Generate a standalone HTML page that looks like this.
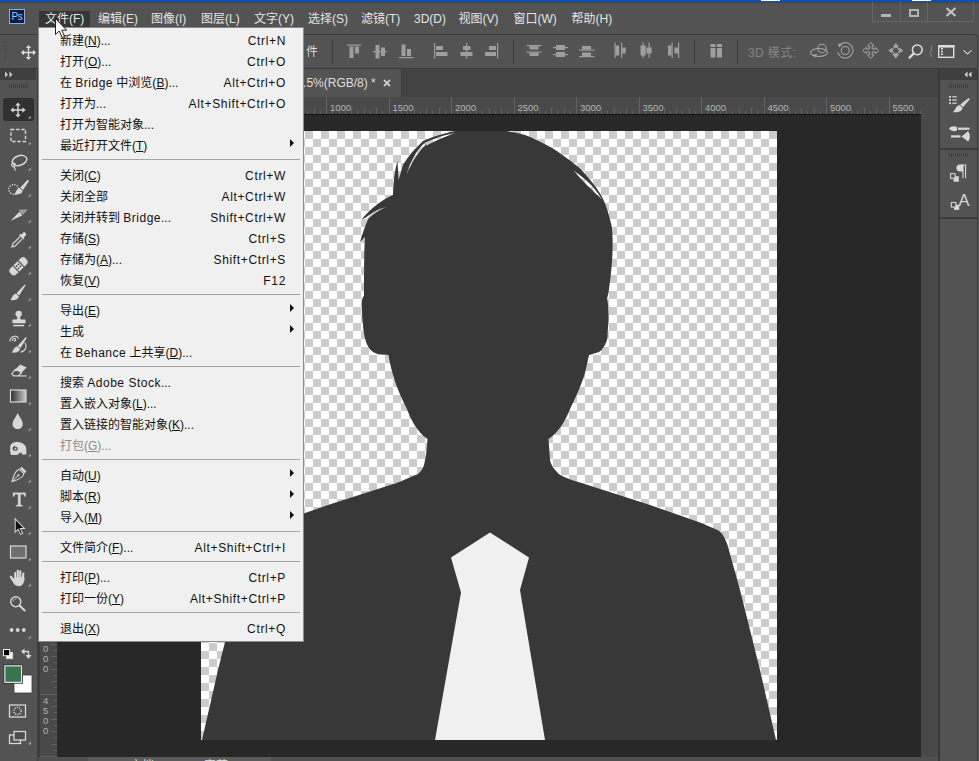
<!DOCTYPE html>
<html lang="zh-CN">
<head>
<meta charset="utf-8">
<title>Photoshop</title>
<style>
*{box-sizing:border-box;margin:0;padding:0}
html,body{width:979px;height:761px;overflow:hidden;background:#535353}
body{position:relative;font-family:"Liberation Sans","Noto Sans CJK SC",sans-serif;font-size:12px;color:#e6e6e6}
.abs{position:absolute}
#topblue{left:0;top:0;width:979px;height:2px;background:#1051b0}
#menubar{left:0;top:2px;width:979px;height:32px;background:#535353}
.mi{position:absolute;top:9px;height:16px;line-height:16px;font-size:12px;color:#e4e4e4;white-space:nowrap}
#optbar{left:0;top:34px;width:978px;height:35px;background:#535353;border:1px solid #3a3a3a;border-left:none;border-radius:0 4px 4px 0}
.vsep{position:absolute;top:40px;width:1px;height:24px;background:#3f3f3f}
#toolbar{left:0;top:69px;width:38px;height:692px;background:#535353;border-right:1px solid #3c3c3c}
#tabbar{left:38px;top:69px;width:901px;height:28px;background:#434343}
#hruler{left:38px;top:97px;width:883px;height:17px;background:#464646}
#vruler{left:40px;top:114px;width:17px;height:643px;background:#464646}
#work{left:57px;top:114px;width:864px;height:642.5px;background:#282828;overflow:hidden;border-top:1px solid #101010}
#vscroll{left:921px;top:97px;width:17px;height:660px;background:#494949}
#status{left:38px;top:757px;width:901px;height:4px;background:#4f4f4f}
#rpanel{left:938px;top:69px;width:41px;height:692px;background:#535353;border-left:2px solid #383838}
#menu{left:38px;top:27px;width:266px;height:615px;background:#f0f0f0;border:1px solid #8a8a8a;padding:2px 2px;color:#111;font-size:12px}
.it{position:relative;height:21px;line-height:22px;padding-left:19px;white-space:nowrap}
.la{letter-spacing:0.5px}
.it .sc{position:absolute;right:15px;top:0;letter-spacing:0.65px}
.it .ar{position:absolute;right:7px;top:3.5px;width:0;height:0;border-left:4px solid #111;border-top:4px solid transparent;border-bottom:4px solid transparent}
.it.dis{color:#8c8c8c}
.sp{height:9px;position:relative}
.sp:after{content:"";position:absolute;left:1px;right:1px;top:3px;height:1px;background:#a5a5a5}
u{text-decoration:underline;text-underline-offset:1px}
</style>
</head>
<body>
<div id="topblue" class="abs"><i class="abs" style="left:761px;top:0;width:19px;height:1px;background:#fff"></i><i class="abs" style="left:912px;top:0;width:19px;height:1px;background:#fff"></i></div>
<div id="menubar" class="abs"><i class="abs" style="left:0;top:0;width:979px;height:1px;background:#454a50"></i><i class="abs" style="left:0;top:1px;width:979px;height:1px;background:#4d4d4d"></i><div class="abs" style="left:39px;top:9px;width:51px;height:16px;background:#363636"></div><div class="abs" style="left:9px;top:7px;width:16px;height:15px;background:#0c1d3f;border:1px solid #86aee2;color:#a4c8f6;font-size:10px;line-height:13px;text-align:center;letter-spacing:-0.4px">Ps</div><span class="mi" style="left:45px">文件(F)</span><span class="mi" style="left:98px">编辑(E)</span><span class="mi" style="left:151px">图像(I)</span><span class="mi" style="left:201px">图层(L)</span><span class="mi" style="left:254px">文字(Y)</span><span class="mi" style="left:308px">选择(S)</span><span class="mi" style="left:361px">滤镜(T)</span><span class="mi" style="left:414px">3D(D)</span><span class="mi" style="left:458.5px">视图(V)</span><span class="mi" style="left:513.5px">窗口(W)</span><span class="mi" style="left:571.5px">帮助(H)</span><div class="abs" style="left:872px;top:0;width:102px;height:20px;border:1px solid #666;border-top:none"></div><div class="abs" style="left:900px;top:0;width:1px;height:19px;background:#666"></div><div class="abs" style="left:927px;top:0;width:1px;height:19px;background:#666"></div><div class="abs" style="left:881px;top:12px;width:10px;height:3px;background:#b4b4b4"></div><div class="abs" style="left:909px;top:7px;width:10px;height:8px;border:2px solid #b4b4b4"></div><svg class="abs" style="left:945px;top:5px" width="12" height="10" viewBox="0 0 12 10"><path d="M1.5,1 L10.5,9 M10.5,1 L1.5,9" stroke="#c4c4c4" stroke-width="2.2" fill="none"/></svg></div>
<div id="optbar" class="abs"></div>
<svg class="abs" style="left:0;top:35px" width="978" height="33" viewBox="0 35 978 33"><path d="M4.5,42V60M6.5,42V60" stroke="#454545" stroke-width="1" stroke-dasharray="1,1"/><path transform="translate(28.5,52.5)" d="M0,-7.6 L2.7,-4.4 L0.7,-4.4 L0.7,-0.7 L4.4,-0.7 L4.4,-2.7 L7.6,0 L4.4,2.7 L4.4,0.7 L0.7,0.7 L0.7,4.4 L2.7,4.4 L0,7.6 L-2.7,4.4 L-0.7,4.4 L-0.7,0.7 L-4.4,0.7 L-4.4,2.7 L-7.6,0 L-4.4,-2.7 L-4.4,-0.7 L-0.7,-0.7 L-0.7,-4.4 L-2.7,-4.4 Z" fill="#dcdcdc"/><path d="M332.5,40V64" stroke="#3d3d3d" stroke-width="1"/><path d="M513.5,40V64" stroke="#3d3d3d" stroke-width="1"/><path d="M694.5,40V64" stroke="#3d3d3d" stroke-width="1"/><path d="M737.5,40V64" stroke="#3d3d3d" stroke-width="1"/><rect x="347" y="44.5" width="14" height="1.2" fill="#9e9e9e"/><rect x="349.5" y="46.5" width="4" height="11.5" fill="#9e9e9e"/><rect x="355" y="46.5" width="4" height="7" fill="#9e9e9e"/><rect x="373" y="51" width="14" height="1.2" fill="#9e9e9e"/><rect x="375.5" y="45" width="4" height="13.5" fill="#9e9e9e"/><rect x="381" y="47.5" width="4" height="8.5" fill="#9e9e9e"/><rect x="399" y="57" width="14.5" height="1.2" fill="#9e9e9e"/><rect x="401.5" y="44.5" width="4" height="11.5" fill="#9e9e9e"/><rect x="407" y="49" width="4" height="7" fill="#9e9e9e"/><rect x="434" y="43" width="1.2" height="15.5" fill="#9e9e9e"/><rect x="436" y="46" width="7" height="4" fill="#9e9e9e"/><rect x="436" y="52" width="11.5" height="4" fill="#9e9e9e"/><rect x="466" y="43" width="1.2" height="15.5" fill="#9e9e9e"/><rect x="463" y="46" width="7.5" height="4" fill="#9e9e9e"/><rect x="460.5" y="52" width="12" height="4" fill="#9e9e9e"/><rect x="497" y="43" width="1.2" height="15.5" fill="#9e9e9e"/><rect x="489" y="46" width="7" height="4" fill="#9e9e9e"/><rect x="485" y="52" width="11" height="4" fill="#9e9e9e"/><rect x="526.5" y="45" width="15" height="1.2" fill="#9e9e9e"/><rect x="529.5" y="46.2" width="9" height="3.3" fill="#9e9e9e"/><rect x="526.5" y="51.5" width="15" height="1.2" fill="#9e9e9e"/><rect x="529.5" y="52.7" width="9" height="3.3" fill="#9e9e9e"/><rect x="553" y="47" width="15" height="1.2" fill="#9e9e9e"/><rect x="556" y="45" width="9" height="5" fill="#9e9e9e"/><rect x="553" y="54" width="15" height="1.2" fill="#9e9e9e"/><rect x="556" y="52" width="9" height="5" fill="#9e9e9e"/><rect x="579" y="49.5" width="15.5" height="1.2" fill="#9e9e9e"/><rect x="582" y="46" width="9" height="3.5" fill="#9e9e9e"/><rect x="579" y="56" width="15.5" height="1.2" fill="#9e9e9e"/><rect x="582" y="52.5" width="9" height="3.5" fill="#9e9e9e"/><rect x="614.5" y="42.5" width="1.2" height="15.5" fill="#9e9e9e"/><rect x="615.7" y="45.5" width="3.5" height="10" fill="#9e9e9e"/><rect x="621" y="42.5" width="1.2" height="15.5" fill="#9e9e9e"/><rect x="622.2" y="47.5" width="3.5" height="6" fill="#9e9e9e"/><rect x="642.5" y="42.5" width="1.2" height="15.5" fill="#9e9e9e"/><rect x="640.5" y="45.5" width="5.2" height="10" fill="#9e9e9e"/><rect x="648.5" y="42.5" width="1.2" height="15.5" fill="#9e9e9e"/><rect x="646.5" y="47.5" width="5.2" height="6" fill="#9e9e9e"/><rect x="671.5" y="42.5" width="1.2" height="15.5" fill="#9e9e9e"/><rect x="668" y="45.5" width="3.5" height="10" fill="#9e9e9e"/><rect x="678" y="42.5" width="1.2" height="15.5" fill="#9e9e9e"/><rect x="674.5" y="47.5" width="3.5" height="6" fill="#9e9e9e"/><rect x="710.5" y="44" width="5" height="3" fill="#9e9e9e"/><rect x="710.5" y="48" width="5" height="9.5" fill="#9e9e9e"/><rect x="717" y="44" width="5" height="3" fill="#9e9e9e"/><rect x="717" y="48" width="5" height="9.5" fill="#9e9e9e"/><g fill="none" stroke="#a6a6a6" stroke-width="1.1"><circle cx="822" cy="48.5" r="4.2"/><ellipse cx="819" cy="52.5" rx="8.5" ry="4"/></g><path d="M812.5,55 L817,54 L815,57.5 Z" fill="#a6a6a6"/><g fill="none" stroke="#a6a6a6" stroke-width="1.1"><circle cx="845.3" cy="50.5" r="4"/><path d="M840.6,44.2 A7.7,7.7 0 1 1 837.8,52.2"/></g><path d="M838,43.5 L842.5,44.5 L839,47.5 Z" fill="#a6a6a6"/><path transform="translate(870.8,50.5)" d="M0,-8 L3.2,-4.5 L1.4,-4.5 L1.4,-1.4 L4.5,-1.4 L4.5,-3.2 L8,0 L4.5,3.2 L4.5,1.4 L1.4,1.4 L1.4,4.5 L3.2,4.5 L0,8 L-3.2,4.5 L-1.4,4.5 L-1.4,1.4 L-4.5,1.4 L-4.5,3.2 L-8,0 L-4.5,-3.2 L-4.5,-1.4 L-1.4,-1.4 L-1.4,-4.5 L-3.2,-4.5 Z" fill="none" stroke="#a6a6a6" stroke-width="1"/><g transform="translate(895.8,50.5)" fill="#a6a6a6"><path d="M0,-7.5 L3,-3.5 L-3,-3.5 Z M0,8 L3.5,3.5 L-3.5,3.5 Z M-7.5,0 L-3.5,-3 L-3.5,3 Z M7.5,0 L3.5,-3 L3.5,3 Z"/><path d="M0,-3.5V3.5M-3.5,0H3.5" stroke="#a6a6a6" stroke-width="1.6"/><circle cx="0" cy="0" r="3.3" fill="#535353" stroke="#a6a6a6" stroke-width="1"/></g><circle cx="917.3" cy="49.8" r="4.9" fill="none" stroke="#dcdcdc" stroke-width="1.5"/><path d="M913.6,53.6 L909.6,57.6" stroke="#dcdcdc" stroke-width="2.2" stroke-linecap="round"/><path d="M932,45 C930,47 933,49 931,51 C929,53 932,55 931,57" fill="none" stroke="#8a8a8a" stroke-width="1"/><rect x="938.7" y="45.7" width="15" height="11.6" fill="none" stroke="#dcdcdc" stroke-width="1.4"/><rect x="938" y="45" width="16.4" height="2.6" fill="#dcdcdc"/><rect x="941" y="48" width="2" height="1.6" fill="#dcdcdc"/><rect x="941" y="50.7" width="2" height="1.6" fill="#dcdcdc"/><rect x="941" y="53.4" width="2" height="1.6" fill="#dcdcdc"/><path d="M963.5,50.3 L967.5,54 L971.5,50.3" fill="none" stroke="#cfcfcf" stroke-width="1.1"/></svg><span class="abs" style="left:304px;top:44px;font-size:12px;line-height:16px;color:#dcdcdc;white-space:nowrap;width:14px;overflow:hidden;direction:rtl">件</span><span class="abs" style="left:748px;top:44.5px;font-size:12px;line-height:16px;color:#858585;white-space:nowrap;letter-spacing:0.4px">3D 模式:</span>
<div id="toolbar" class="abs"></div>
<svg class="abs" style="left:0;top:69px" width="38" height="692" viewBox="0 69 38 692"><rect x="0" y="69" width="36" height="11" fill="#3f3f3f"/>
<path d="M5,71.5 L8,74.5 L5,77.5 Z M9.5,71.5 L12.5,74.5 L9.5,77.5 Z" fill="#cfcfcf"/>
<path d="M9.5,84V88M11.5,84V88M13.5,84V88M15.5,84V88M17.5,84V88M19.5,84V88M21.5,84V88M23.5,84V88M25.5,84V88M27.5,84V88" stroke="#3e3e3e" stroke-width="1"/>
<rect x="3" y="98" width="31" height="23" rx="3" fill="#303030"/><defs><linearGradient id="gr" x1="0" x2="1" y1="0" y2="0"><stop offset="0" stop-color="#2c2c2c"/><stop offset="1" stop-color="#c8c8c8"/></linearGradient></defs><g transform="translate(18,110)"><path d="M0,-7.6 L2.7,-4.4 L0.7,-4.4 L0.7,-0.7 L4.4,-0.7 L4.4,-2.7 L7.6,0 L4.4,2.7 L4.4,0.7 L0.7,0.7 L0.7,4.4 L2.7,4.4 L0,7.6 L-2.7,4.4 L-0.7,4.4 L-0.7,0.7 L-4.4,0.7 L-4.4,2.7 L-7.6,0 L-4.4,-2.7 L-4.4,-0.7 L-0.7,-0.7 L-0.7,-4.4 L-2.7,-4.4 Z" fill="#d8d8d8"/><path d="M12.7,5.8 L12.7,8.6 L9.9,8.6 Z" fill="#a8a8a8"/></g><g transform="translate(18,136)"><rect x="-7" y="-6.5" width="14.5" height="12" fill="none" stroke="#d8d8d8" stroke-width="1.4" stroke-dasharray="3.4,1.8"/><path d="M12.7,5.8 L12.7,8.6 L9.9,8.6 Z" fill="#a8a8a8"/></g><g transform="translate(18,162)"><ellipse cx="1.5" cy="-1.5" rx="7.5" ry="4.8" transform="rotate(-18 1.5 -1.5)" fill="none" stroke="#d8d8d8" stroke-width="1.5"/><circle cx="-4.5" cy="3" r="1.8" fill="none" stroke="#d8d8d8" stroke-width="1.2"/><path d="M-4,4.5 C-3,6 -3.5,7.5 -2.5,8.5" fill="none" stroke="#d8d8d8" stroke-width="1.3"/><path d="M12.7,5.8 L12.7,8.6 L9.9,8.6 Z" fill="#a8a8a8"/></g><g transform="translate(18,188)"><circle cx="-4.3" cy="1.4" r="4.9" fill="none" stroke="#ececec" stroke-width="1.4" stroke-dasharray="1.1,1.47"/><g transform="translate(3.6,-1.2) scale(0.92)"><path d="M6.6,-7.6 L8,-6.4 L1.6,3.6 L-1.6,1 Z" fill="#d8d8d8"/><path d="M-2.4,1.2 L1.2,4.4 C0.8,7.6 -3,9 -8,8 C-6,6.6 -6.4,2.8 -2.4,1.2 Z" fill="#d8d8d8"/></g><path d="M12.7,5.8 L12.7,8.6 L9.9,8.6 Z" fill="#a8a8a8"/></g><g transform="translate(18,214)"><path d="M0.7,-4.5 L9.7,-4.5 L4.9,0.9 L2.1,-1.6 Z" fill="#9c9c9c"/><path d="M1.4,-2.2 L4.3,1.6 L-7.4,6.7 Z" fill="#d8d8d8"/><path d="M12.7,5.8 L12.7,8.6 L9.9,8.6 Z" fill="#a8a8a8"/></g><g transform="translate(18,240)"><g transform="translate(0.5,0) scale(0.87)"><path d="M5.5,-8.5 C7.5,-9.5 9.5,-7.5 8.5,-5.5 L6,-3 L7,-2 L5.5,-0.5 L0.5,-5.5 L2,-7 L3,-6 Z" fill="#d8d8d8"/><path d="M1.5,-3.5 L-6.5,4.5 L-7.5,8 L-4,7 L4,-1" fill="none" stroke="#d8d8d8" stroke-width="1.4"/></g><path d="M12.7,5.8 L12.7,8.6 L9.9,8.6 Z" fill="#a8a8a8"/></g><g transform="translate(18,266)"><g transform="translate(0.5,0.3) rotate(-44) scale(1.12)"><rect x="-9.5" y="-3.8" width="19" height="7.6" rx="3.2" fill="#d8d8d8"/><rect x="-3.7" y="-3.8" width="7.4" height="7.6" fill="#535353"/><rect x="-2.7" y="-3.8" width="5.4" height="7.6" fill="#d8d8d8"/><circle cx="-1.2" cy="-1.3" r="0.75" fill="#444"/><circle cx="1.2" cy="-1.3" r="0.75" fill="#444"/><circle cx="-1.2" cy="1.3" r="0.75" fill="#444"/><circle cx="1.2" cy="1.3" r="0.75" fill="#444"/></g><path d="M12.7,5.8 L12.7,8.6 L9.9,8.6 Z" fill="#a8a8a8"/></g><g transform="translate(18,292)"><path d="M6.6,-7.6 L7.6,-6.8 L1.2,3.6 L-1.6,1.4 Z" fill="#d8d8d8"/><path d="M-2.2,1.6 L0.8,4.2 C0.6,7 -2.5,8.6 -7.6,8 C-6,6.8 -6,3 -2.2,1.6 Z" fill="#d8d8d8"/><path d="M12.7,5.8 L12.7,8.6 L9.9,8.6 Z" fill="#a8a8a8"/></g><g transform="translate(18,318)"><path transform="translate(0.7,0.8)" d="M0,-8 C-4,-8 -4,-3.2 -1.6,-2 C-1.1,-1 -1.4,0 -2.4,0.8 L-6.3,0.8 L-6.3,4.5 L6.8,4.5 L6.8,0.8 L2.4,0.8 C1.4,0 1.1,-1 1.6,-2 C4,-3.2 4,-8 0,-8 Z" fill="#d8d8d8"/><rect x="-4.8" y="6.8" width="11" height="1.5" fill="#d8d8d8"/><path d="M12.7,5.8 L12.7,8.6 L9.9,8.6 Z" fill="#a8a8a8"/></g><g transform="translate(18,344)"><path d="M-8,-2.5 C-8.5,-8 -1,-9.5 0.5,-5.5 M-5.6,-3.2 C-6.2,-5.6 -2.8,-6.6 -2.3,-4.4 C-2,-3 -3.9,-2.7 -4,-4" fill="none" stroke="#d8d8d8" stroke-width="1.1"/><path d="M6.8,-1.5 C9.5,2 8,7 2.5,8.3" fill="none" stroke="#d8d8d8" stroke-width="1.1"/><g transform="translate(1.2,0.6)"><path d="M6.6,-7.6 L7.6,-6.8 L1.2,3.6 L-1.6,1.4 Z" fill="#d8d8d8"/><path d="M-2.2,1.6 L0.8,4.2 C0.6,7 -2.5,8.6 -7.6,8 C-6,6.8 -6,3 -2.2,1.6 Z" fill="#d8d8d8"/></g><path d="M12.7,5.8 L12.7,8.6 L9.9,8.6 Z" fill="#a8a8a8"/></g><g transform="translate(18,370)"><g transform="translate(0.5,1.6) scale(0.9)"><path d="M2,-8 L9,-4.5 L3.5,1 L-3.5,-2.5 Z" fill="#d8d8d8"/><path d="M-3.5,-2.5 L3.5,1 L0,4.8 L-5.5,4.8 L-7.5,2.5 Z" fill="none" stroke="#d8d8d8" stroke-width="1.3" stroke-linejoin="round"/><path d="M0,4.8 L9,4.8" stroke="#d8d8d8" stroke-width="1.3"/></g><path d="M12.7,5.8 L12.7,8.6 L9.9,8.6 Z" fill="#a8a8a8"/></g><g transform="translate(18,396)"><rect x="-7.5" y="-6" width="15.5" height="12" fill="url(#gr)" stroke="#d8d8d8" stroke-width="1.2"/><path d="M12.7,5.8 L12.7,8.6 L9.9,8.6 Z" fill="#a8a8a8"/></g><g transform="translate(18,422)"><path transform="translate(-0.3,-0.5)" d="M0,-8.6 C1.8,-4.4 5.1,-1.2 5.1,2.5 C5.1,5.8 2.8,7.6 0,7.6 C-2.8,7.6 -5.1,5.8 -5.1,2.5 C-5.1,-1.2 -1.8,-4.4 0,-8.6 Z" fill="#d8d8d8"/><path d="M12.7,5.8 L12.7,8.6 L9.9,8.6 Z" fill="#a8a8a8"/></g><g transform="translate(18,448)"><g transform="translate(0,0.6) scale(1.04,1.06)"><path d="M-7.5,-1 C-8,-5 -3,-7 1,-6 C5,-5.5 8,-3 8,0.5 L8,5.5 L4,5.5 L3,3.5 L-1,6 L-6.5,6 C-8,4 -7.5,1.5 -7.5,-1 Z" fill="#d8d8d8"/><ellipse cx="-2.8" cy="0" rx="2.6" ry="2" fill="#535353" transform="rotate(20 -2.8 0)"/><circle cx="-2.5" cy="0.2" r="0.9" fill="#d8d8d8"/></g><path d="M12.7,5.8 L12.7,8.6 L9.9,8.6 Z" fill="#a8a8a8"/></g><g transform="translate(18,474)"><g transform="translate(0.6,0.6) scale(0.88)"><path d="M3.5,-9 L9,-3.5 L7,-1.5 L1.5,-7 Z" fill="#d8d8d8"/><path d="M1,-6 L6,-1 C5.5,2.5 3,5 -7.5,8 C-4.5,-2.5 -2.5,-5.5 1,-6 Z" fill="none" stroke="#d8d8d8" stroke-width="1.3" stroke-linejoin="round"/><path d="M-7,7.5 L-1,1.5" stroke="#d8d8d8" stroke-width="1.1"/><circle cx="-0.3" cy="0.8" r="1.3" fill="#d8d8d8"/></g><path d="M12.7,5.8 L12.7,8.6 L9.9,8.6 Z" fill="#a8a8a8"/></g><g transform="translate(18,500)"><g transform="translate(1.3,-0.4) scale(0.9)" stroke="#d8d8d8" stroke-width="0.35" stroke-linejoin="round"><path d="M-7,-7.5 L7,-7.5 L7,-3.5 L5.8,-3.5 C5.6,-5.3 5,-5.9 3.5,-5.9 L1.3,-5.9 L1.3,5 C1.3,6 1.9,6.3 3.6,6.4 L3.6,7.5 L-3.6,7.5 L-3.6,6.4 C-1.9,6.3 -1.3,6 -1.3,5 L-1.3,-5.9 L-3.5,-5.9 C-5,-5.9 -5.6,-5.3 -5.8,-3.5 L-7,-3.5 Z" fill="#d8d8d8"/></g><path d="M12.7,5.8 L12.7,8.6 L9.9,8.6 Z" fill="#a8a8a8"/></g><g transform="translate(18,526)"><g transform="translate(0.4,0.6) scale(0.92)"><path d="M-3.5,-8.5 L-3.5,6 L-0.3,3 L2.3,8.5 L4.6,7.4 L2,2 L6.5,2 Z" fill="#111" stroke="#d8d8d8" stroke-width="1.1" stroke-linejoin="miter"/></g><path d="M12.7,5.8 L12.7,8.6 L9.9,8.6 Z" fill="#a8a8a8"/></g><g transform="translate(18,552)"><rect x="-7.5" y="-6" width="15.5" height="12" fill="#6e6e6e" stroke="#d8d8d8" stroke-width="1.2"/><path d="M12.7,5.8 L12.7,8.6 L9.9,8.6 Z" fill="#a8a8a8"/></g><g transform="translate(18,578)"><g fill="#d8d8d8" transform="translate(0.9,0)"><rect x="-4.7" y="-6" width="2.1" height="9" rx="1.05"/><rect x="-2.2" y="-8.3" width="2.1" height="11" rx="1.05"/><rect x="0.3" y="-7.8" width="2.1" height="11" rx="1.05"/><rect x="2.8" y="-5.6" width="2.1" height="9" rx="1.05" transform="rotate(8 3.8 0)"/><path d="M-4.7,-0.5 L5.6,-1 C6,3.5 4.2,8.3 -0.3,8.3 C-3.4,8.3 -5.3,5.8 -6.4,3.6 L-9,-0.6 C-9.6,-1.9 -8.1,-2.8 -7,-1.7 L-4.7,1.2 Z"/></g><path d="M12.7,5.8 L12.7,8.6 L9.9,8.6 Z" fill="#a8a8a8"/></g><g transform="translate(18,604)"><circle cx="-2.2" cy="-2.2" r="5" fill="none" stroke="#d8d8d8" stroke-width="1.4"/><path d="M1.6,1.6 L6.6,6.6" stroke="#d8d8d8" stroke-width="2.1" stroke-linecap="round"/><path d="M-4.8,-2.8 C-4.4,-4.4 -3,-5 -1.6,-5" stroke="#d8d8d8" stroke-width="0.8" fill="none"/></g><g transform="translate(18,630)"><circle cx="-6.4" cy="0" r="1.9" fill="#d8d8d8"/><circle cx="-0.3" cy="0" r="1.9" fill="#d8d8d8"/><circle cx="5.8" cy="0" r="1.9" fill="#d8d8d8"/><path d="M12.7,5.8 L12.7,8.6 L9.9,8.6 Z" fill="#a8a8a8"/></g><rect x="6.5" y="652.5" width="6.2" height="6.2" fill="#f4f4f4" stroke="#d8d8d8" stroke-width="0.8"/><rect x="3.5" y="649.5" width="6.2" height="6.2" fill="#000" stroke="#eee" stroke-width="1"/>
<path d="M24,651.5 H28.5 V655.5" fill="none" stroke="#d8d8d8" stroke-width="1.3"/><path d="M21,651.5 L24.5,648.5 L24.5,654.5 Z M28.5,659 L25.5,655 L31.5,655 Z" fill="#d8d8d8"/>
<rect x="14" y="675" width="18" height="18" fill="#fff" stroke="#3a3a3a" stroke-width="0.8"/>
<rect x="3.5" y="664.5" width="19.5" height="19.2" fill="#2e2e2e"/><rect x="4.3" y="665.3" width="17.9" height="17.6" fill="#f4f4f4"/><rect x="5.4" y="666.4" width="15.7" height="15.4" fill="#37754c"/>
<rect x="9.5" y="705" width="16" height="12" fill="none" stroke="#d8d8d8" stroke-width="1.3"/><circle cx="17.5" cy="711" r="3.6" fill="none" stroke="#f0f0f0" stroke-width="1.3" stroke-dasharray="1.1,1.16"/>
<rect x="9.5" y="735" width="11" height="8.5" fill="none" stroke="#d8d8d8" stroke-width="1.3"/><rect x="14" y="731.5" width="11.5" height="8.5" fill="#4c4c4c" stroke="#d8d8d8" stroke-width="1.3"/><path d="M31,741.5 L31,744.5 L28,744.5 Z" fill="#a8a8a8"/></svg>
<div id="tabbar" class="abs"><div class="abs" style="left:19px;top:0;width:345px;height:28px;background:#535353;border-right:1px solid #3c3c3c"></div><span class="abs" style="left:89.5px;top:6px;font-size:12px;line-height:16px;color:#dedede;white-space:nowrap">商务人士剪影头像素材.png @ 12.5%(RGB/8) *</span><svg class="abs" style="left:345px;top:10px" width="8" height="8" viewBox="0 0 8 8"><path d="M1,1L7,7M7,1L1,7" stroke="#c8c8c8" stroke-width="1.8"/></svg></div>
<svg class="abs" style="left:38px;top:97px" width="883" height="18" viewBox="38 97 883 18"><rect x="38" y="97" width="883" height="17" fill="#494949"/><rect x="57" y="114" width="864" height="1" fill="#121212"/><path d="M64.00,107.5V114M70.25,110.5V114M76.50,97V114M82.75,110.5V114M89.00,107.5V114M95.25,110.5V114M101.50,107.5V114M107.75,110.5V114M114.00,107.5V114M120.25,110.5V114M126.50,107.5V114M132.75,110.5V114M139.00,97V114M145.25,110.5V114M151.50,107.5V114M157.75,110.5V114M164.00,107.5V114M170.25,110.5V114M176.50,107.5V114M182.75,110.5V114M189.00,107.5V114M195.25,110.5V114M201.50,97V114M207.75,110.5V114M214.00,107.5V114M220.25,110.5V114M226.50,107.5V114M232.75,110.5V114M239.00,107.5V114M245.25,110.5V114M251.50,107.5V114M257.75,110.5V114M264.00,97V114M270.25,110.5V114M276.50,107.5V114M282.75,110.5V114M289.00,107.5V114M295.25,110.5V114M301.50,107.5V114M307.75,110.5V114M314.00,107.5V114M320.25,110.5V114M326.50,97V114M332.75,110.5V114M339.00,107.5V114M345.25,110.5V114M351.50,107.5V114M357.75,110.5V114M364.00,107.5V114M370.25,110.5V114M376.50,107.5V114M382.75,110.5V114M389.00,97V114M395.25,110.5V114M401.50,107.5V114M407.75,110.5V114M414.00,107.5V114M420.25,110.5V114M426.50,107.5V114M432.75,110.5V114M439.00,107.5V114M445.25,110.5V114M451.50,97V114M457.75,110.5V114M464.00,107.5V114M470.25,110.5V114M476.50,107.5V114M482.75,110.5V114M489.00,107.5V114M495.25,110.5V114M501.50,107.5V114M507.75,110.5V114M514.00,97V114M520.25,110.5V114M526.50,107.5V114M532.75,110.5V114M539.00,107.5V114M545.25,110.5V114M551.50,107.5V114M557.75,110.5V114M564.00,107.5V114M570.25,110.5V114M576.50,97V114M582.75,110.5V114M589.00,107.5V114M595.25,110.5V114M601.50,107.5V114M607.75,110.5V114M614.00,107.5V114M620.25,110.5V114M626.50,107.5V114M632.75,110.5V114M639.00,97V114M645.25,110.5V114M651.50,107.5V114M657.75,110.5V114M664.00,107.5V114M670.25,110.5V114M676.50,107.5V114M682.75,110.5V114M689.00,107.5V114M695.25,110.5V114M701.50,97V114M707.75,110.5V114M714.00,107.5V114M720.25,110.5V114M726.50,107.5V114M732.75,110.5V114M739.00,107.5V114M745.25,110.5V114M751.50,107.5V114M757.75,110.5V114M764.00,97V114M770.25,110.5V114M776.50,107.5V114M782.75,110.5V114M789.00,107.5V114M795.25,110.5V114M801.50,107.5V114M807.75,110.5V114M814.00,107.5V114M820.25,110.5V114M826.50,97V114M832.75,110.5V114M839.00,107.5V114M845.25,110.5V114M851.50,107.5V114M857.75,110.5V114M864.00,107.5V114M870.25,110.5V114M876.50,107.5V114M882.75,110.5V114M889.00,97V114M895.25,110.5V114M901.50,107.5V114M907.75,110.5V114M914.00,107.5V114M920.25,110.5V114" stroke="#636363" stroke-width="1" fill="none" shape-rendering="crispEdges"/><text x="330.0" y="111" font-size="9.5" fill="#b4b4b4" font-family="Liberation Sans, sans-serif">1000</text><text x="392.5" y="111" font-size="9.5" fill="#b4b4b4" font-family="Liberation Sans, sans-serif">1500</text><text x="455.0" y="111" font-size="9.5" fill="#b4b4b4" font-family="Liberation Sans, sans-serif">2000</text><text x="517.5" y="111" font-size="9.5" fill="#b4b4b4" font-family="Liberation Sans, sans-serif">2500</text><text x="580.0" y="111" font-size="9.5" fill="#b4b4b4" font-family="Liberation Sans, sans-serif">3000</text><text x="642.5" y="111" font-size="9.5" fill="#b4b4b4" font-family="Liberation Sans, sans-serif">3500</text><text x="705.0" y="111" font-size="9.5" fill="#b4b4b4" font-family="Liberation Sans, sans-serif">4000</text><text x="767.5" y="111" font-size="9.5" fill="#b4b4b4" font-family="Liberation Sans, sans-serif">4500</text><text x="830.0" y="111" font-size="9.5" fill="#b4b4b4" font-family="Liberation Sans, sans-serif">5000</text><text x="892.5" y="111" font-size="9.5" fill="#b4b4b4" font-family="Liberation Sans, sans-serif">5500</text></svg>
<svg class="abs" style="left:38px;top:115px" width="19" height="642" viewBox="38 115 19 642"><rect x="38" y="115" width="2" height="642" fill="#3c3c3c"/><rect x="40" y="115" width="17" height="642" fill="#494949"/><path d="M51,119.00H57M54,125.25H57M40,131.50H57M54,137.75H57M51,144.00H57M54,150.25H57M51,156.50H57M54,162.75H57M51,169.00H57M54,175.25H57M51,181.50H57M54,187.75H57M40,194.00H57M54,200.25H57M51,206.50H57M54,212.75H57M51,219.00H57M54,225.25H57M51,231.50H57M54,237.75H57M51,244.00H57M54,250.25H57M40,256.50H57M54,262.75H57M51,269.00H57M54,275.25H57M51,281.50H57M54,287.75H57M51,294.00H57M54,300.25H57M51,306.50H57M54,312.75H57M40,319.00H57M54,325.25H57M51,331.50H57M54,337.75H57M51,344.00H57M54,350.25H57M51,356.50H57M54,362.75H57M51,369.00H57M54,375.25H57M40,381.50H57M54,387.75H57M51,394.00H57M54,400.25H57M51,406.50H57M54,412.75H57M51,419.00H57M54,425.25H57M51,431.50H57M54,437.75H57M40,444.00H57M54,450.25H57M51,456.50H57M54,462.75H57M51,469.00H57M54,475.25H57M51,481.50H57M54,487.75H57M51,494.00H57M54,500.25H57M40,506.50H57M54,512.75H57M51,519.00H57M54,525.25H57M51,531.50H57M54,537.75H57M51,544.00H57M54,550.25H57M51,556.50H57M54,562.75H57M40,569.00H57M54,575.25H57M51,581.50H57M54,587.75H57M51,594.00H57M54,600.25H57M51,606.50H57M54,612.75H57M51,619.00H57M54,625.25H57M40,631.50H57M54,637.75H57M51,644.00H57M54,650.25H57M51,656.50H57M54,662.75H57M51,669.00H57M54,675.25H57M51,681.50H57M54,687.75H57M40,694.00H57M54,700.25H57M51,706.50H57M54,712.75H57M51,719.00H57M54,725.25H57M51,731.50H57M54,737.75H57M51,744.00H57M54,750.25H57M40,756.50H57" stroke="#636363" stroke-width="1" fill="none" shape-rendering="crispEdges"/><text x="43" y="641.5" font-size="9.5" fill="#b4b4b4" font-family="Liberation Sans, sans-serif">4</text><text x="43" y="651.5" font-size="9.5" fill="#b4b4b4" font-family="Liberation Sans, sans-serif">0</text><text x="43" y="661.5" font-size="9.5" fill="#b4b4b4" font-family="Liberation Sans, sans-serif">0</text><text x="43" y="671.5" font-size="9.5" fill="#b4b4b4" font-family="Liberation Sans, sans-serif">0</text><text x="43" y="704.0" font-size="9.5" fill="#b4b4b4" font-family="Liberation Sans, sans-serif">4</text><text x="43" y="714.0" font-size="9.5" fill="#b4b4b4" font-family="Liberation Sans, sans-serif">5</text><text x="43" y="724.0" font-size="9.5" fill="#b4b4b4" font-family="Liberation Sans, sans-serif">0</text><text x="43" y="734.0" font-size="9.5" fill="#b4b4b4" font-family="Liberation Sans, sans-serif">0</text></svg>
<div id="work" class="abs"></div>
<svg class="abs" style="left:201px;top:131px" width="576" height="609" viewBox="201 131 576 609">
<defs><pattern id="chk" x="201" y="131" width="16" height="16" patternUnits="userSpaceOnUse"><rect width="16" height="16" fill="#fff"/><rect x="8" width="8" height="8" fill="#ccc"/><rect y="8" width="8" height="8" fill="#ccc"/></pattern></defs>
<rect x="201" y="131" width="576" height="609" fill="url(#chk)"/>
<path d="M456,131 C445,133 432,137 423,141 L415,149 C410,154 406,160 403.2,164.5 L398.6,180 L397.5,161 C394.6,170 393.2,185 393,195 C383,199 370,209 362,219 L369,217 C365,226 362,235 360,242 L365,237 C364,250 364,275 364,296 C361,298 361.5,310 363,325 C364,340 368,352 378,354 L388.5,355 C391,372 398,392 406.5,408 C409,414 411,419.5 414.5,425 C418.5,431 423,436 427.5,439 C427,448 426,456 425,460 C424,467 422,471 418,474 L398,482.5 L328,505 L278,522.5 L260.5,530 C256,532 253,538 250.5,545 L238,590 L218,670 L202,740 L776,740 L760,670 L740,590 L727.5,545 C725,538 722,532 717.5,530 L700,522.5 L650,505 L580,482.5 C565,478 559,475 557.5,472.5 C552,467 550.5,463 550,460 C549.5,452 549,445 548.5,439 C553,436 558,431 562,425 C565.5,419.5 568,414 570.5,408 C578,393 582.5,381 585,373 L589,355 L599,352 C606,347 608,338 607.5,334 C609,320 609,305 607,299 L608.6,292 C611,275 612.5,260 612.5,249 C613,235 612,225 610.6,222 C608,210 604,200 601,195 C595,185 588,177 579.5,168 C570,160 560,153 552,148 C543,143 533,138 525,135 C518,133 512,132 506.6,131 Z" fill="#383838"/>
<path d="M455,133 C445,134.8 433,138.8 424.2,143 L426.6,145.4 C435,141 446,136.4 455,133 Z M424,143.4 C416.5,150 410.5,161 406.4,174.8 C411,163.5 417.5,153 425.6,145 Z M386,207 C378,209.2 370,213.4 364.6,218.6 L369,217.9 C373.5,213.8 379.5,210.2 386,207 Z M573.5,170.4 C585,178 595.5,188 602,199.5 C593,190.6 583.4,182.2 573.5,170.4 Z" fill="url(#chk)"/>
<path d="M490,532.5 L529,557.5 L520,590 L545,740 L435,740 L461,592.5 L451,557.5 Z" fill="#f0f0f0"/>
</svg>
<div id="vscroll" class="abs"></div>
<div id="status" class="abs"><div class="abs" style="left:50px;top:0;width:183px;height:4px;background:#5a5a5a;overflow:hidden"><span class="abs" style="left:42px;top:2px;font-size:12px;line-height:14px;color:#e0e0e0;white-space:nowrap">文档:64.2M/0 字节</span></div></div>
<div id="rpanel" class="abs"></div>
<svg class="abs" style="left:940px;top:69px" width="39" height="692" viewBox="940 69 39 692"><rect x="940" y="69" width="37" height="11" fill="#3f3f3f"/><rect x="977" y="69" width="1" height="692" fill="#3b3b3b"/><rect x="978" y="69" width="1" height="692" fill="#575757"/><path d="M967.5,71.5 L964.5,74.5 L967.5,77.5 Z M971.5,71.5 L968.5,74.5 L971.5,77.5 Z" fill="#d8d8d8"/><rect x="940" y="148" width="37" height="2" fill="#3c3c3c"/><rect x="940" y="217" width="37" height="2" fill="#3c3c3c"/><path d="M949.5,84V88M951.5,84V88M953.5,84V88M955.5,84V88M957.5,84V88M959.5,84V88M961.5,84V88M963.5,84V88M965.5,84V88M967.5,84V88" stroke="#3e3e3e" stroke-width="1"/><path d="M949.5,153V157M951.5,153V157M953.5,153V157M955.5,153V157M957.5,153V157M959.5,153V157M961.5,153V157M963.5,153V157M965.5,153V157M967.5,153V157" stroke="#3e3e3e" stroke-width="1"/><g fill="#d8d8d8"><rect x="949" y="96" width="2" height="1.7"/><rect x="949" y="99.2" width="2" height="1.7"/><rect x="949" y="102.4" width="2" height="1.7"/><rect x="952.3" y="96.2" width="4.5" height="1.2"/><rect x="952.3" y="99.4" width="4.5" height="1.2"/><rect x="952.3" y="102.6" width="4.5" height="1.2"/><path d="M968.6,98 L969.8,99.2 L963,107.3 L960.2,104.6 Z"/><path d="M959.6,105 L962.4,107.8 C962.6,110.8 958.5,113 953,112.2 C955,110.8 955,106.5 959.6,105 Z"/></g><g fill="#d8d8d8"><path d="M949,128.5 C951,126 954.5,125.5 957,127 L957,130.5 C954.5,132 951,131 949,128.5 Z"/><rect x="958" y="127.6" width="11.5" height="2.2"/><rect x="951" y="135.3" width="9.5" height="2.2"/><path d="M961.5,136.4 L968,131.2 C970.5,134 970.5,139 968,141.6 Z"/></g><rect x="953.5" y="176.2" width="5.3" height="5.5" fill="#d8d8d8"/><rect x="950.5" y="173.7" width="4.6" height="4.6" fill="#535353" stroke="#d8d8d8" stroke-width="1.1"/><path d="M962.4,165 H966.2 M963,165 V178.2 M965.6,165 V178.2" stroke="#d8d8d8" stroke-width="1.1" fill="none"/><path d="M963,164.5 H960 C955,164.5 955,171.6 960,171.6 H963 Z" fill="#d8d8d8"/><rect x="954" y="204.7" width="5.2" height="5.2" fill="#d8d8d8"/><rect x="951.3" y="202.5" width="4.6" height="4.6" fill="#535353" stroke="#d8d8d8" stroke-width="1.1"/><text x="958.4" y="205.6" font-size="16.5" fill="#d8d8d8" font-family="Liberation Sans, sans-serif">A</text></svg>
<div id="menu" class="abs">
<div class="it">新建(<u>N</u>)...<span class="sc">Ctrl+N</span></div>
<div class="it">打开(<u>O</u>)...<span class="sc">Ctrl+O</span></div>
<div class="it">在 <span class="la">Bridge</span> 中浏览(<u>B</u>)...<span class="sc">Alt+Ctrl+O</span></div>
<div class="it">打开为...<span class="sc">Alt+Shift+Ctrl+O</span></div>
<div class="it">打开为智能对象...</div>
<div class="it">最近打开文件(<u>T</u>)<i class="ar"></i></div>
<div class="sp"></div>
<div class="it">关闭(<u>C</u>)<span class="sc">Ctrl+W</span></div>
<div class="it">关闭全部<span class="sc">Alt+Ctrl+W</span></div>
<div class="it">关闭并转到 <span class="la">Bridge</span>...<span class="sc">Shift+Ctrl+W</span></div>
<div class="it">存储(<u>S</u>)<span class="sc">Ctrl+S</span></div>
<div class="it">存储为(<u>A</u>)...<span class="sc">Shift+Ctrl+S</span></div>
<div class="it">恢复(<u>V</u>)<span class="sc">F12</span></div>
<div class="sp"></div>
<div class="it">导出(<u>E</u>)<i class="ar"></i></div>
<div class="it">生成<i class="ar"></i></div>
<div class="it">在 <span class="la">Behance</span> 上共享(<u>D</u>)...</div>
<div class="sp"></div>
<div class="it">搜索 <span class="la">Adobe Stock</span>...</div>
<div class="it">置入嵌入对象(<u>L</u>)...</div>
<div class="it">置入链接的智能对象(<u>K</u>)...</div>
<div class="it dis">打包(<u>G</u>)...</div>
<div class="sp"></div>
<div class="it">自动(<u>U</u>)<i class="ar"></i></div>
<div class="it">脚本(<u>R</u>)<i class="ar"></i></div>
<div class="it">导入(<u>M</u>)<i class="ar"></i></div>
<div class="sp"></div>
<div class="it">文件简介(<u>F</u>)...<span class="sc">Alt+Shift+Ctrl+I</span></div>
<div class="sp"></div>
<div class="it">打印(<u>P</u>)...<span class="sc">Ctrl+P</span></div>
<div class="it">打印一份(<u>Y</u>)<span class="sc">Alt+Shift+Ctrl+P</span></div>
<div class="sp"></div>
<div class="it">退出(<u>X</u>)<span class="sc">Ctrl+Q</span></div>
</div>
<svg class="abs" style="left:53px;top:16px" width="16" height="24" viewBox="-2 -2 16 24"><path d="M0.5,0.5 L0.5,16.5 L4.2,13 L7.2,19.5 L9.6,18.4 L6.7,12.2 L11.6,12.2 Z" fill="#fff" stroke="#222" stroke-width="1" stroke-linejoin="miter"/></svg>
</body>
</html>
